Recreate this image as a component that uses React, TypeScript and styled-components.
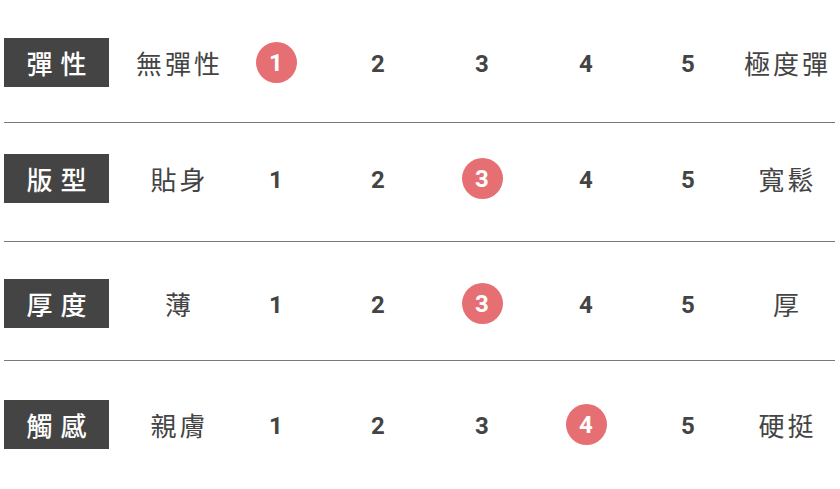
import styled, { createGlobalStyle } from 'styled-components';

const GlobalStyle = createGlobalStyle`
  html, body {
    margin: 0;
    padding: 0;
    background: #fff;
  }
  body {
    font-family: "Noto Sans CJK TC", "Noto Sans", sans-serif;
  }
`;

const rows = [
  { id: 1, title: "彈性", low: "無彈性", high: "極度彈", value: 1, top: 38, bottom: 35 },
  { id: 2, title: "版型", low: "貼身", high: "寬鬆", value: 3, top: 31, bottom: 38 },
  { id: 3, title: "厚度", low: "薄", high: "厚", value: 3, top: 37, bottom: 32 },
  { id: 4, title: "觸感", low: "親膚", high: "硬挺", value: 4, top: 39, bottom: 30 },
];

export default function App() {
  return (
    <Wrapper>
      <GlobalStyle />
      {rows.map((row, i) => (
        <Row key={row.id} $top={row.top} $bottom={row.bottom} $last={i === rows.length - 1}>
          <Label>{row.title}</Label>
          <EndText>{row.low}</EndText>
          {[1, 2, 3, 4, 5].map((n) => (
            <Cell key={n}>
              {n === row.value ? <Dot>{n}</Dot> : <Num>{n}</Num>}
            </Cell>
          ))}
          <EndText>{row.high}</EndText>
        </Row>
      ))}
    </Wrapper>
  );
}

const Wrapper = styled.div`
  width: 831px;
  margin-left: 4px;
`;

const Row = styled.div<{ $top: number; $bottom: number; $last: boolean }>`
  display: grid;
  grid-template-columns: 105px 21px 96px 100px 104px 104px 104px 100px 96px;
  align-items: center;
  height: 49px;
  padding-top: ${(p) => p.$top}px;
  padding-bottom: ${(p) => p.$bottom}px;
  border-bottom: ${(p) => (p.$last ? 'none' : '1px solid #7a7a7a')};
`;

const Label = styled.div`
  grid-column: 1;
  height: 49px;
  background: #444;
  color: #fff;
  display: flex;
  align-items: center;
  justify-content: center;
  font-size: 26px;
  font-weight: 500;
  letter-spacing: 8px;
  padding-left: 8px;
  box-sizing: border-box;
`;

const EndText = styled.div`
  text-align: center;
  color: #444;
  font-size: 26px;
  letter-spacing: 3px;
  padding-left: 3px;
  line-height: 1;
  &:nth-child(2) {
    grid-column: 3;
  }
`;

const Cell = styled.div`
  display: flex;
  justify-content: center;
  align-items: center;
`;

const Num = styled.span`
  font-family: Roboto, "Liberation Sans", sans-serif;
  font-weight: 700;
  font-size: 24px;
  color: #444;
  line-height: 1;
  margin-top: 3px;
`;

const Dot = styled.span`
  width: 41px;
  height: 41px;
  border-radius: 50%;
  background: #e56f72;
  color: #fff;
  display: flex;
  align-items: center;
  justify-content: center;
  font-family: Roboto, "Liberation Sans", sans-serif;
  font-weight: 700;
  font-size: 24px;
`;
